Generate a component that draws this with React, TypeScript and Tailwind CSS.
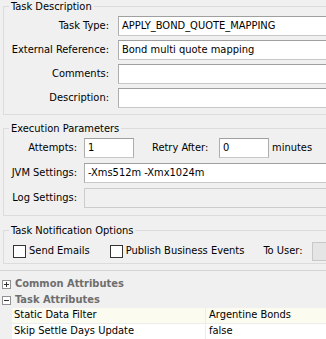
import React from "react";

const font = { fontFamily: '"DejaVu Sans Condensed", "Liberation Sans", sans-serif' };

function Input({ value = "", className = "" }: { value?: string; className?: string }) {
  return (
    <div
      className={
        "h-[20px] bg-white border border-[#adadad] border-t-[#a0a0a0] border-b-[#c8c8c8] px-[3px] flex items-center text-[11px] text-black whitespace-nowrap overflow-hidden " +
        className
      }
    >
      {value}
    </div>
  );
}

function Group({ title, children, className = "" }: { title: string; children: React.ReactNode; className?: string }) {
  return (
    <fieldset className={"ml-[3px] w-[360px] border border-[#dcdcdc] " + className}>
      <legend className="ml-[5px] px-[2px] text-[11px] leading-[13px] text-black">{title}</legend>
      {children}
    </fieldset>
  );
}

function Check({ label }: { label: string }) {
  return (
    <div className="flex items-center gap-[3px]">
      <div className="w-[13px] h-[13px] bg-white border border-[#333333]" />
      <span className="text-[11px] text-black">{label}</span>
    </div>
  );
}

function PlusMinus({ minus }: { minus?: boolean }) {
  return (
    <svg width="9" height="9" viewBox="0 0 9 9" className="shrink-0">
      <rect x="0.5" y="0.5" width="8" height="8" fill="white" stroke="#919191" />
      <line x1="2" y1="4.5" x2="7" y2="4.5" stroke="#333" />
      {!minus && <line x1="4.5" y1="2" x2="4.5" y2="7" stroke="#333" />}
    </svg>
  );
}

export default function App() {
  return (
    <div className="w-[326px] h-[339px] bg-[#f0f0f0] overflow-hidden" style={font}>
      <Group title="Task Description" className="h-[115px]">
        <div className="flex flex-col gap-[4px] pt-[3px]">
          {[
            ["Task Type:", "APPLY_BOND_QUOTE_MAPPING"],
            ["External Reference:", "Bond multi quote mapping"],
            ["Comments:", ""],
            ["Description:", ""],
          ].map(([l, v]) => (
            <div key={l} className="flex items-center">
              <div className="w-[105px] text-right text-[11px] text-black shrink-0">{l}</div>
              <Input value={v} className="ml-[9px] w-[230px]" />
            </div>
          ))}
        </div>
      </Group>

      <Group title="Execution Parameters" className="mt-[7px] h-[94px]">
        <div className="flex flex-col gap-[5px] pt-[3px]">
          <div className="flex items-center">
            <div className="w-[73px] text-right text-[11px] shrink-0">Attempts:</div>
            <Input value="1" className="ml-[7px] w-[50px]" />
            <div className="ml-[18px] w-[62px] text-[11px]">Retry After:</div>
            <Input value="0" className="ml-[5px] w-[50px]" />
            <div className="ml-[3px] text-[11px]">minutes</div>
          </div>
          <div className="flex items-center">
            <div className="w-[73px] text-right text-[11px] shrink-0">JVM Settings:</div>
            <Input value="-Xms512m -Xmx1024m" className="ml-[7px] w-[260px]" />
          </div>
          <div className="flex items-center">
            <div className="w-[73px] text-right text-[11px] shrink-0">Log Settings:</div>
            <div className="ml-[7px] w-[260px] h-[20px] bg-[#f0f0f0] border border-[#cccccc]" />
          </div>
        </div>
      </Group>

      <Group title="Task Notification Options" className="mt-[8px] h-[40px]">
        <div className="flex items-center pt-[5px] pl-[9px]">
          <Check label="Send Emails" />
          <div className="ml-[20px]">
            <Check label="Publish Business Events" />
          </div>
          <div className="ml-[19px] text-[11px]">To User:</div>
          <div className="ml-[10px] w-[40px] h-[19px] bg-[#e5e5e5] border border-[#c8c8c8]" />
        </div>
      </Group>

      <div className="mt-[6px] border-t border-[#d4d4d4]">
        <div className="h-[16px] mt-[5px] flex items-center gap-[4px] pl-[2px]">
          <PlusMinus />
          <span className="text-[11px] font-bold text-[#6e6e6e] leading-[16px]">Common Attributes</span>
        </div>
        <div className="h-[16px] flex items-center gap-[4px] pl-[2px]">
          <PlusMinus minus />
          <span className="text-[11px] font-bold text-[#6e6e6e] leading-[16px]">Task Attributes</span>
        </div>
        <div className="ml-[12px]">
          <div className="h-[16px] flex bg-[#fbfbef] border-b border-[#ececec] text-[11px]">
            <div className="w-[194px] pl-[2px] border-r border-[#ececec] flex items-center">Static Data Filter</div>
            <div className="pl-[3px] flex items-center">Argentine Bonds</div>
          </div>
          <div className="h-[16px] flex bg-white border-b border-[#ececec] text-[11px]">
            <div className="w-[194px] pl-[2px] border-r border-[#ececec] flex items-center">Skip Settle Days Update</div>
            <div className="pl-[3px] flex items-center">false</div>
          </div>
        </div>
      </div>
    </div>
  );
}
